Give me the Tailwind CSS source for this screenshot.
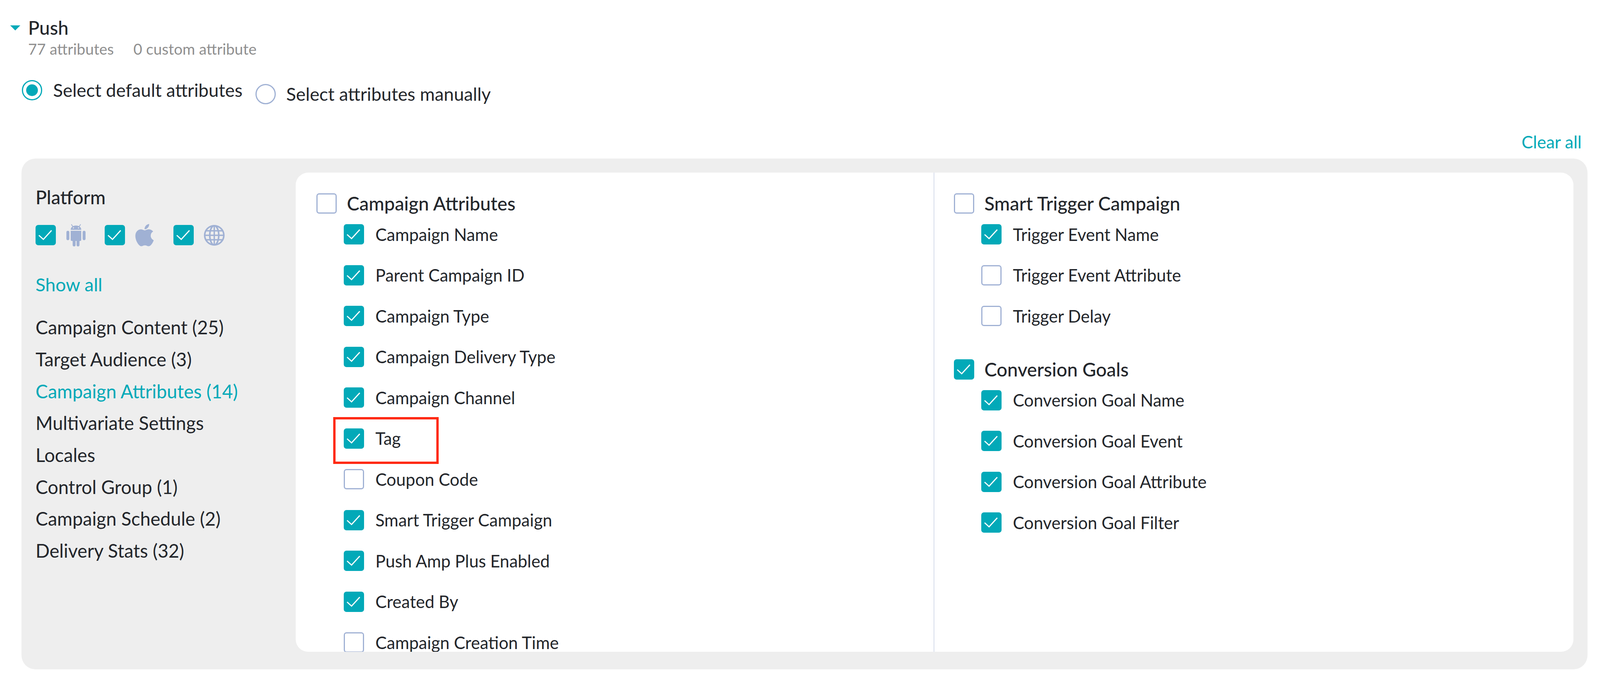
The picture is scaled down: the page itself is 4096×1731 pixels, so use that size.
<!DOCTYPE html>
<html lang="en">
<head>
    <meta charset="UTF-8">
    <title>Push attributes</title>
    <script src="https://cdn.jsdelivr.net/npm/@tailwindcss/browser@4"></script>
</head>
<body class="bg-white">
    <div class="relative w-[4096px] h-[1731px] overflow-hidden font-['Lato',sans-serif] text-[#23262b]">
        <!-- header -->
        <div class="flex items-center h-[60px] mt-[41px] pl-[26px]">
            <div class="w-0 h-0 border-l-[13px] border-r-[13px] border-t-[13px] border-l-transparent border-r-transparent border-t-[#02a9b8]"></div>
            <span class="ml-[20px] text-[48px] font-medium">Push</span>
        </div>
        <div class="flex items-center h-[44px] mt-[2px] pl-[72px] gap-[50px] text-[39px] text-[#8f8f8f]">
            <span>77 attributes</span>
            <span>0 custom attribute</span>
        </div>
        <!-- radios -->
        <div class="flex items-start mt-[58px] pl-[56px] h-[70px] text-[46.300px]">
            <div class="flex items-center h-[52px]">
                <span class="flex items-center justify-center w-[52px] h-[52px] rounded-full border-[3px] border-[#02a9b8]"><span class="w-[30px] h-[30px] rounded-full bg-[#02a9b8]"></span></span>
                <span class="ml-[28px]">Select default attributes</span>
            </div>
            <div class="flex items-center h-[52px] mt-[10px] ml-[33px]">
                <span class="w-[52px] h-[52px] rounded-full border-[3px] border-[#a0b1d4]"></span>
                <span class="ml-[27px]">Select attributes manually</span>
            </div>
        </div>
        <div class="flex justify-end items-center h-[50px] mt-[63px] pr-[47px] text-[44px] text-[#02a9b8]">Clear all</div>
        <!-- panel -->
        <div class="flex ml-[55px] mt-[18px] w-[4009px] h-[1308px] pt-[36px] rounded-[36px] bg-[#eeeeee]">
            <aside class="w-[702px] pl-[36px] pt-[33px] shrink-0">
                <div class="flex items-center h-[60px] text-[47.500px] font-medium">Platform</div>
                <div class="flex items-center h-[58px] mt-[38px]">
                    <span class="w-[52px] h-[52px] rounded-[7px] bg-[#02a9b8]"><svg class="w-[52px] h-[52px]" viewBox="0 0 52 52"><path d="M8.500 26.500L20 37L41 14" fill="none" stroke="#fff" stroke-width="3"/></svg></span>
                    <svg class="ml-[27px] w-[49px] h-[58px]" viewBox="0 0 49 58" fill="#a0b1d4">
                        <path d="M11 15.5C11 8.5 17 4.5 24.500 4.500S38 8.500 38 15.500Z"/>
                        <path d="M13 2l4 6M36 2l-4 6" stroke="#a0b1d4" stroke-width="2" stroke-linecap="round"/>
                        <circle cx="18" cy="10.500" r="1.500" fill="#eeeeee"/><circle cx="31" cy="10.500" r="1.500" fill="#eeeeee"/>
                        <path d="M11 18h27v23a3 3 0 0 1-3 3H14a3 3 0 0 1-3-3Z"/>
                        <rect x="0" y="18" width="7.500" height="24" rx="3.700"/><rect x="41.500" y="18" width="7.500" height="24" rx="3.700"/>
                        <rect x="16" y="40" width="7.500" height="18" rx="3.700"/><rect x="26" y="40" width="7.500" height="18" rx="3.700"/>
                    </svg>
                    <span class="ml-[49px] w-[52px] h-[52px] rounded-[7px] bg-[#02a9b8]"><svg class="w-[52px] h-[52px]" viewBox="0 0 52 52"><path d="M8.500 26.500L20 37L41 14" fill="none" stroke="#fff" stroke-width="3"/></svg></span>
                    <svg class="ml-[26px] w-[48px] h-[58px]" viewBox="0 28 384 456" preserveAspectRatio="none" fill="#a0b1d4"><path d="M318.700 268.700c-.2-36.700 16.400-64.400 50-84.800-18.800-26.900-47.200-41.700-84.700-44.600-35.500-2.800-74.300 20.700-88.500 20.700-15 0-49.400-19.700-76.400-19.700C63.300 141.200 4 184.800 4 273.500q0 39.300 14.400 81.200c12.800 36.700 59 126.700 107.200 125.200 25.200-.6 43-17.900 75.800-17.900 31.800 0 48.300 17.900 76.400 17.900 48.600-.7 90.400-82.500 102.600-119.300-65.200-30.700-61.700-90-61.700-91.900zm-56.600-164.200c27.300-32.400 24.800-61.900 24-72.500-24.100 1.400-52 16.400-67.900 34.900-17.500 19.800-27.800 44.300-25.600 71.900 26.100 2 49.900-11.400 69.500-34.300z"/></svg>
                    <span class="ml-[50px] w-[52px] h-[52px] rounded-[7px] bg-[#02a9b8]"><svg class="w-[52px] h-[52px]" viewBox="0 0 52 52"><path d="M8.500 26.500L20 37L41 14" fill="none" stroke="#fff" stroke-width="3"/></svg></span>
                    <svg class="ml-[26px] w-[53px] h-[53px]" viewBox="0 0 53 53" fill="none" stroke="#a0b1d4" stroke-width="4"><circle cx="26.500" cy="26.500" r="24.500"/><ellipse cx="26.500" cy="26.500" rx="11.500" ry="24.500"/><path d="M5 15h43M5 38h43M2 26.500h49M26.500 2v49" stroke-width="3.500"/></svg>
                </div>
                <div class="flex items-center h-[50px] mt-[72px] text-[47px] text-[#02a9b8]">Show all</div>
                <div id="side" class="flex flex-col mt-[44px] text-[47.500px]"></div>
            </aside>
            <!-- white panel -->
            <div class="flex w-[3271px] h-[1227px] rounded-[32px] bg-white overflow-hidden">
                <div id="colA" class="w-[1635px] h-full pl-[53px] pt-[52px] border-r-2 border-[#d5dcea] overflow-hidden"></div>
                <div id="colB" class="flex-1 pl-[50px] pt-[52px]"></div>
            </div>
        </div>
        <!-- highlight -->
        <div class="absolute left-[853px] top-[1068px] w-[270px] h-[120px] border-[6px] border-[#ff2a12]"></div>
    </div>

    <script>
        const tick = '<svg class="w-[52px] h-[52px]" viewBox="0 0 52 52"><path d="M8.500 26.500L20 37L41 14" fill="none" stroke="#fff" stroke-width="3"/></svg>';
        function box(on) {
            return on
                ? `<span class="shrink-0 w-[52px] h-[52px] rounded-[7px] bg-[#02a9b8]">${tick}</span>`
                : '<span class="shrink-0 w-[52px] h-[52px] rounded-[7px] border-[3px] border-[#a0b1d4] bg-white"></span>';
        }
        function head(label, on) {
            return `<div class="flex items-center h-[54px] text-[48px] font-medium">${box(on)}<span class="ml-[26px]">${label}</span></div>`;
        }
        function row(label, on) {
            return `<div class="flex items-center h-[104.500px] ml-[70px] text-[43.500px]">${box(on)}<span class="ml-[29px]">${label}</span></div>`;
        }

        document.getElementById('side').innerHTML = ['Campaign Content (25)', 'Target Audience (3)', 'Campaign Attributes (14)', 'Multivariate Settings', 'Locales', 'Control Group (1)', 'Campaign Schedule (2)', 'Delivery Stats (32)']
            .map((s, i) => `<div class="flex items-center h-[81.700px] ${i === 2 ? 'text-[#02a9b8]' : ''}">${s}</div>`).join('');

        document.getElementById('colA').innerHTML = head('Campaign Attributes', false) + [
            ['Campaign Name', 1], ['Parent Campaign ID', 1], ['Campaign Type', 1], ['Campaign Delivery Type', 1], ['Campaign Channel', 1],
            ['Tag', 1], ['Coupon Code', 0], ['Smart Trigger Campaign', 1], ['Push Amp Plus Enabled', 1], ['Created By', 1], ['Campaign Creation Time', 0]
        ].map(r => row(r[0], r[1])).join('');

        document.getElementById('colB').innerHTML = head('Smart Trigger Campaign', false)
            + row('Trigger Event Name', 1) + row('Trigger Event Attribute', 0) + row('Trigger Delay', 0)
            + '<div class="h-[57px]"></div>' + head('Conversion Goals', true)
            + row('Conversion Goal Name', 1) + row('Conversion Goal Event', 1) + row('Conversion Goal Attribute', 1) + row('Conversion Goal Filter', 1);
    </script>
</body>
</html>
